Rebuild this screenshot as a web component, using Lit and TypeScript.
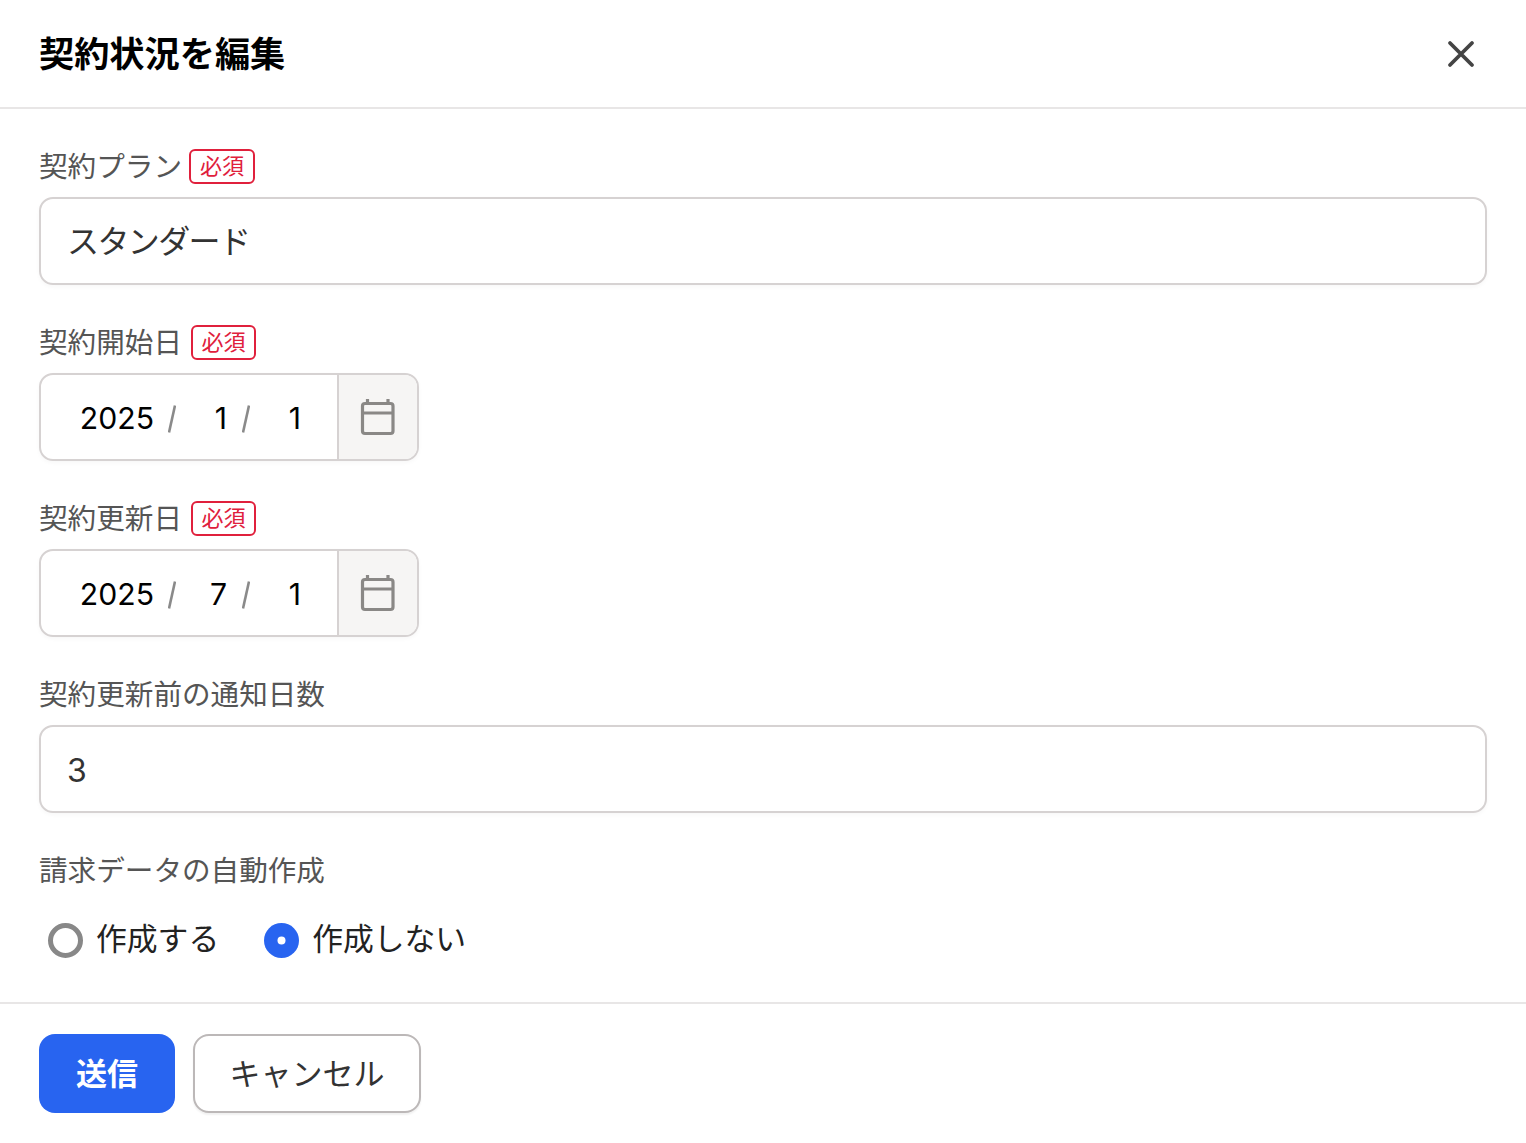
import { LitElement, html, css } from "lit";
import { customElement } from "lit/decorators.js";

@customElement("app-root")
export class AppRoot extends LitElement {
  static styles = css`
    :host {
      display: block;
      width: 1526px;
      height: 1143px;
      background: #fff;
      font-family: Inter, "Noto Sans CJK JP", "Noto Sans", sans-serif;
      color: #333;
      overflow: hidden;
    }
    .header {
      height: 107px;
      display: flex;
      align-items: center;
      justify-content: space-between;
      padding: 0 48px 0 39px;
      border-bottom: 2px solid #e8e6e6;
    }
    .title {
      font-size: 35.2px;
      font-weight: 700;
      color: #000;
      line-height: 1;
      margin: 0;
      padding-top: 2px;
    }
    .close {
      display: block;
      width: 34px;
      height: 34px;
    }
    .body {
      padding: 40px 39px 0;
      display: flex;
      flex-direction: column;
      gap: 40px;
    }
    .field {
      display: flex;
      flex-direction: column;
      gap: 13px;
    }
    .label-row {
      height: 35px;
      display: flex;
      align-items: center;
      gap: 9px;
    }
    .label {
      font-size: 28.6px;
      color: #555;
      line-height: 35px;
    }
    .badge {
      box-sizing: border-box;
      height: 35px;
      width: 65px;
      border: 2px solid #e0203c;
      border-radius: 6px;
      color: #e0203c;
      font-size: 22px;
      line-height: 31px;
      text-align: center;
    }
    .first .badge { margin-left: -2px; width: 66px; }
    .input {
      box-sizing: border-box;
      height: 88px;
      border: 2px solid #d6d2d2;
      border-radius: 14px;
      padding: 0 26px;
      display: flex;
      align-items: center;
      font-size: 32px;
      color: #333;
      box-shadow: 0 2px 4px rgba(0, 0, 0, 0.03);
    }
    .plan { letter-spacing: -1.6px; position: relative; top: -2px; }
    .num { position: relative; top: 1px; }
    .date {
      box-sizing: border-box;
      width: 380px;
      height: 88px;
      border: 2px solid #d6d2d2;
      border-radius: 14px;
      display: flex;
      overflow: hidden;
      box-shadow: 0 2px 4px rgba(0, 0, 0, 0.03);
    }
    .segments {
      flex: 1;
      display: flex;
      align-items: center;
      font-size: 30.2px;
      color: #000;
    }
    .seg { text-align: right; position: relative; top: 1px; }
    .seg.y { width: 113px; }
    .seg.m { width: 51px; }
    .seg.d { width: 51px; }
    .slash {
      display: block;
      width: 8px;
      height: 28px;
      margin-left: 14px;
      margin-top: 4px;
      flex: none;
    }
    .seg.m + .slash { margin-left: 15px; }
    .cal {
      width: 80px;
      flex: none;
      background: #f6f5f4;
      border-left: 2px solid #d6d2d2;
      display: flex;
      align-items: center;
      justify-content: center;
      box-sizing: border-box;
    }
    .cal svg { display: block; width: 36px; height: 38px; }
    .radios {
      display: flex;
      align-items: center;
      gap: 45px;
      padding-left: 9px;
      height: 35px;
      margin-top: 22px;
    }
    .radio {
      display: flex;
      align-items: center;
      gap: 13px;
      font-size: 30.8px;
      color: #222;
      line-height: 35px;
    }
    .radio span { position: relative; top: -2px; }
    .radio svg { display: block; width: 35px; height: 35px; flex: none; }
    .footer {
      margin-top: 44px;
      border-top: 2px solid #e8e6e6;
      padding: 30px 39px 0;
      display: flex;
      gap: 18px;
    }
    .btn {
      box-sizing: border-box;
      height: 79px;
      border-radius: 16px;
      display: flex;
      align-items: center;
      justify-content: center;
      font: inherit;
      font-size: 31px;
      padding: 0 0 5px;
    }
    .primary {
      width: 136px;
      background: #2864f0;
      border: none;
      color: #fff;
      font-weight: 700;
    }
    .secondary {
      width: 228px;
      background: #fff;
      border: 2px solid #bcb8b8;
      color: #333;
      box-shadow: 0 2px 2px rgba(0, 0, 0, 0.06);
    }
  `;

  private slash() {
    return html`<svg class="slash" viewBox="0 0 8 28"><path d="M7 0.5 1 27.5" stroke="#8a8a8a" stroke-width="2.6" fill="none" /></svg>`;
  }

  private labelRow(text: string, required: boolean) {
    return html`<div class="label-row">
      <span class="label">${text}</span>
      ${required ? html`<span class="badge">必須</span>` : ""}
    </div>`;
  }

  private dateField(label: string, y: string, m: string, d: string) {
    return html`<div class="field">
      ${this.labelRow(label, true)}
      <div class="date">
        <div class="segments">
          <span class="seg y">${y}</span>${this.slash()}
          <span class="seg m">${m}</span>${this.slash()}
          <span class="seg d">${d}</span>
        </div>
        <div class="cal">
          <svg viewBox="0 0 36 38" fill="none" stroke="#8a8886" stroke-width="3.2">
            <rect x="2.5" y="5.5" width="30.5" height="30" rx="2.5" />
            <path d="M2.5 15h30.5M7.5 1v5M28 1v5" />
          </svg>
        </div>
      </div>
    </div>`;
  }

  render() {
    return html`
      <div class="header">
        <h1 class="title">契約状況を編集</h1>
        <svg class="close" viewBox="0 0 34 34" fill="none" stroke="#444" stroke-width="3.8" stroke-linecap="round">
          <path d="M6 6 28 28M28 6 6 28" />
        </svg>
      </div>
      <div class="body">
        <div class="field first">
          ${this.labelRow("契約プラン", true)}
          <div class="input"><span class="plan">スタンダード</span></div>
        </div>
        ${this.dateField("契約開始日", "2025", "1", "1")}
        ${this.dateField("契約更新日", "2025", "7", "1")}
        <div class="field">
          ${this.labelRow("契約更新前の通知日数", false)}
          <div class="input"><span class="num">3</span></div>
        </div>
        <div class="field">
          ${this.labelRow("請求データの自動作成", false)}
          <div class="radios">
            <label class="radio">
              <svg viewBox="0 0 35 35"><circle cx="17.5" cy="17.5" r="15" fill="#fff" stroke="#888" stroke-width="5" /></svg>
              <span>作成する</span>
            </label>
            <label class="radio">
              <svg viewBox="0 0 35 35"><circle cx="17.5" cy="17.5" r="17.5" fill="#2864f0" /><circle cx="17.5" cy="17.5" r="4" fill="#fff" /></svg>
              <span>作成しない</span>
            </label>
          </div>
        </div>
      </div>
      <div class="footer">
        <button class="btn primary">送信</button>
        <button class="btn secondary">キャンセル</button>
      </div>
    `;
  }
}
